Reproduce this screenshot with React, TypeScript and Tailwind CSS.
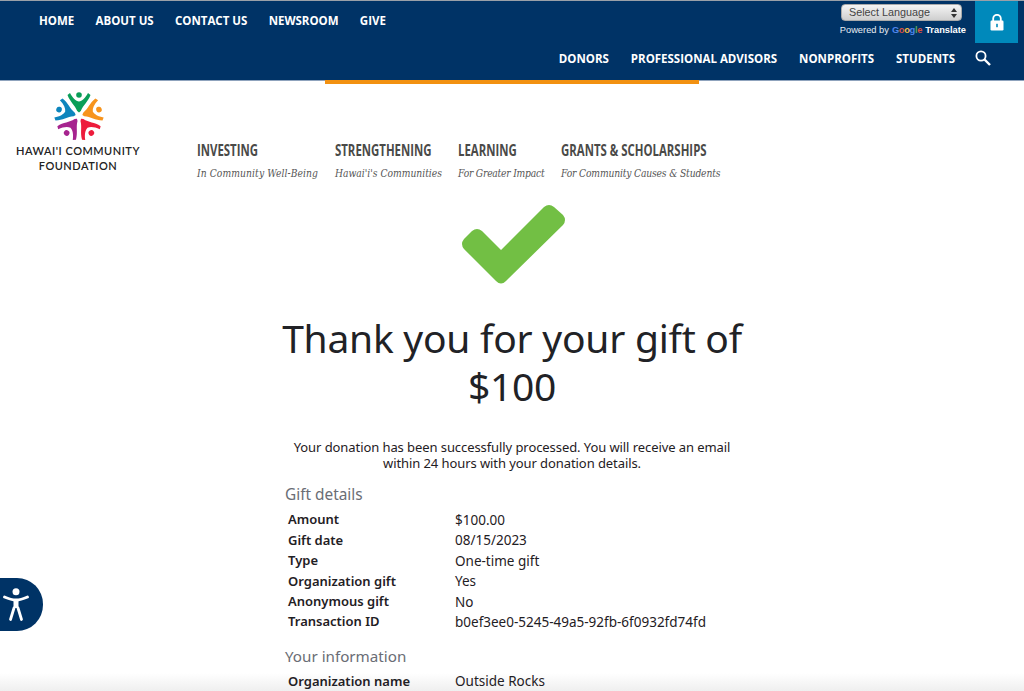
import React from 'react'

const topLinks = ['HOME', 'ABOUT US', 'CONTACT US', 'NEWSROOM', 'GIVE']
const audienceLinks = ['DONORS', 'PROFESSIONAL ADVISORS', 'NONPROFITS', 'STUDENTS']

const mainNav = [
  { title: 'INVESTING', sub: 'In Community Well-Being', width: 'w-[138px]', subTrack: 'tracking-[0.1px]' },
  { title: 'STRENGTHENING', sub: "Hawai'i's Communities", width: 'w-[123px]', subTrack: 'tracking-[0px]' },
  { title: 'LEARNING', sub: 'For Greater Impact', width: 'w-[103px]', subTrack: 'tracking-[-0.25px]' },
  { title: 'GRANTS & SCHOLARSHIPS', sub: 'For Community Causes & Students', width: 'w-[170px]', subTrack: 'tracking-[-0.18px]' },
]

const giftDetails = [
  ['Amount', '$100.00'],
  ['Gift date', '08/15/2023'],
  ['Type', 'One-time gift'],
  ['Organization gift', 'Yes'],
  ['Anonymous gift', 'No'],
  ['Transaction ID', 'b0ef3ee0-5245-49a5-92fb-6f0932fd74fd'],
]

const Person: React.FC<{ color: string; rotate: number }> = ({ color, rotate }) => (
  <g transform={`rotate(${rotate})`} fill={color}>
    <circle cx="0" cy="-21" r="2.8" />
    <path d="M-9 -23 L-11.5 -21 C-9 -14 -4 -11 -1.8 -5 L0 -3.5 L1.8 -5 C4 -11 9 -14 11.5 -21 L9 -23 C6.5 -18 3 -15 0 -14.5 C-3 -15 -6.5 -18 -9 -23 Z" />
  </g>
)

const Logo = () => (
  <div className="flex flex-col items-center">
    <svg width="52" height="50" viewBox="-26 -25 52 50" className="ml-[1px]">
      <Person color="#0a9e58" rotate={0} />
      <Person color="#f7941d" rotate={72} />
      <Person color="#ed1c3c" rotate={144} />
      <Person color="#a6248f" rotate={216} />
      <Person color="#0d85bd" rotate={288} />
    </svg>
    <div className="mt-[2px] text-center text-[11px] leading-[15px] tracking-[0.5px] text-[#222] font-['Lato',sans-serif] font-semibold whitespace-nowrap">
      HAWAI'I COMMUNITY
      <br />
      FOUNDATION
    </div>
  </div>
)

const LangBox = () => (
  <div className="flex flex-col items-end">
    <div className="mr-[4px] mt-[3px] flex h-[17px] w-[121px] items-center justify-between rounded-[4px] border border-[#aaa] bg-gradient-to-b from-[#f4f4f4] to-[#cfcfcf] pl-[7px] pr-[4px] text-[10.8px] text-[#444] font-['Liberation_Sans',sans-serif]">
      <span>Select Language</span>
      <svg width="6" height="10" viewBox="0 0 6 10" fill="#333">
        <path d="M3 0 L6 4 H0 Z M0 6 H6 L3 10 Z" />
      </svg>
    </div>
    <div className="mt-[3px] flex items-center text-[9.3px] leading-[12px] font-['Liberation_Sans',sans-serif] text-[#e8edf3]">
      <span>Powered by</span>
      <span className="ml-[3px] text-[9.3px] font-bold tracking-[-0.3px]">
        <span className="text-[#4f86ec]">G</span>
        <span className="text-[#d9503f]">o</span>
        <span className="text-[#f3bd42]">o</span>
        <span className="text-[#4f86ec]">g</span>
        <span className="text-[#58a55c]">l</span>
        <span className="text-[#d9503f]">e</span>
      </span>
      <span className="ml-[3px] font-bold text-white">Translate</span>
    </div>
  </div>
)

export default function App() {
  return (
    <div className="relative h-[691px] w-full overflow-hidden bg-white font-['Noto_Sans',sans-serif]">
      <header className="h-[81px] border-t border-t-[#9aa0a8] border-b border-b-[#8fa3bd] bg-[#003366]">
        <div className="flex h-[42px] items-start justify-between pl-[39px] pr-[6px]">
          <nav className="mt-[12px] flex gap-[21.25px] text-[11.5px] leading-[16px] font-bold text-white font-['Open_Sans',sans-serif]">
            {topLinks.map((l) => (
              <span key={l}>{l}</span>
            ))}
          </nav>
          <div className="flex items-start gap-[9px]">
            <LangBox />
            <div className="flex h-[42px] w-[43px] items-center justify-center bg-[#0089bb]">
              <svg width="14" height="17" viewBox="0 0 14 17">
                <path d="M3.2 7 V4.6 a3.8 3.8 0 0 1 7.6 0 V7" fill="none" stroke="#fff" strokeWidth="1.8" />
                <rect x="0.5" y="6.5" width="13" height="10" rx="1.2" fill="#fff" />
                <rect x="6.2" y="9.8" width="1.6" height="3.4" fill="#0089bb" />
              </svg>
            </div>
          </div>
        </div>
        <div className="flex items-center justify-end pr-[33px] pt-[8px]">
          <nav className="flex gap-[22px] text-[11.5px] leading-[16px] font-bold text-white font-['Open_Sans',sans-serif]">
            {audienceLinks.map((l) => (
              <span key={l}>{l}</span>
            ))}
          </nav>
          <svg width="16" height="16" viewBox="0 0 16 16" fill="none" stroke="#fff" className="ml-[20px] -mt-[2px]">
            <circle cx="6" cy="6" r="4.6" strokeWidth="1.8" />
            <path d="M9.5 9.5 L15 15" strokeWidth="2.4" />
          </svg>
        </div>
      </header>

      <div className="mx-[325px] -mt-[1px] h-[3.5px] bg-[#f29111]" />

      <div className="flex h-[101.5px] items-start">
        <div className="ml-[15px] mt-[7px] w-[126px]">
          <Logo />
        </div>
        <nav className="ml-[56px] mt-[56px] flex">
          {mainNav.map((n) => (
            <div key={n.title} className={n.width}>
              <div className="origin-left scale-x-[0.735] whitespace-nowrap text-[15.5px] leading-[20px] font-bold text-[#4a4a48] font-['Open_Sans',sans-serif]">
                {n.title}
              </div>
              <div className={`mt-[6px] origin-left scale-x-[0.875] whitespace-nowrap text-[10.5px] leading-[14px] italic text-[#555] font-['DejaVu_Serif',serif] ${n.subTrack}`}>
                {n.sub}
              </div>
            </div>
          ))}
        </nav>
      </div>

      <div className="pointer-events-none absolute inset-x-0 bottom-0 h-[18px] bg-gradient-to-b from-transparent to-[#efefef]" />

      <main className="relative flex flex-col items-center text-[#1f2024]">
        <svg width="106" height="82" viewBox="0 0 106 82" className="ml-[4px] mt-[19px]">
          <path
            d="M3 35 L11 27 Q16 23 21 27 L40 46 L83 3 Q88 -1 93 3 L102 11 Q106 16 102 21 L45 77 Q40 82 35 77 L3 45 Q-1 40 3 35 Z"
            fill="#72bf44"
          />
        </svg>
        <h1 className="mt-[28px] w-[480px] text-center text-[39px] leading-[48px] font-normal tracking-[-0.25px] text-[#212226]">
          Thank you for your gift of $100
        </h1>
        <p className="mt-[29px] w-[460px] text-center text-[13px] leading-[16px] tracking-[-0.08px] text-[#1f2024]">
          Your donation has been successfully processed. You will receive an email within 24 hours with your donation details.
        </p>
        <section className="mt-[13px] w-[454px] text-[13.5px]">
          <h2 className="text-[15.4px] leading-[22px] text-[#6a6d75]">Gift details</h2>
          <dl className="mt-[4px] pl-[3px]">
            {giftDetails.map(([k, v]) => (
              <div key={k} className="flex h-[20.4px] items-center">
                <dt className="w-[167px] text-[13px] font-semibold">{k}</dt>
                <dd>{v}</dd>
              </div>
            ))}
          </dl>
          <h2 className="mt-[13px] text-[15.2px] leading-[22px] text-[#6a6d75]">Your information</h2>
          <div className="mt-[4px] flex h-[20.4px] items-center pl-[3px]">
            <span className="w-[167px] text-[13px] font-semibold">Organization name</span>
            <span>Outside Rocks</span>
          </div>
        </section>
      </main>

      <div className="absolute left-0 top-[578px] flex h-[53px] w-[43px] items-center rounded-r-[26px] bg-[#003366] pl-[3px]">
        <svg width="26" height="34" viewBox="0 0 26 34" fill="none" stroke="#fff" strokeWidth="2.8" strokeLinecap="round" strokeLinejoin="round">
          <circle cx="13" cy="3.7" r="3.5" fill="#fff" stroke="none" />
          <path d="M1.5 9 C6 11 9 12 13 12 C17 12 20 11 24.5 9" />
          <path d="M13 12 V20" strokeWidth="5" strokeLinecap="butt" />
          <path d="M11 20 L7.5 31.5 M15 20 L18.5 31.5" />
        </svg>
      </div>
    </div>
  )
}
